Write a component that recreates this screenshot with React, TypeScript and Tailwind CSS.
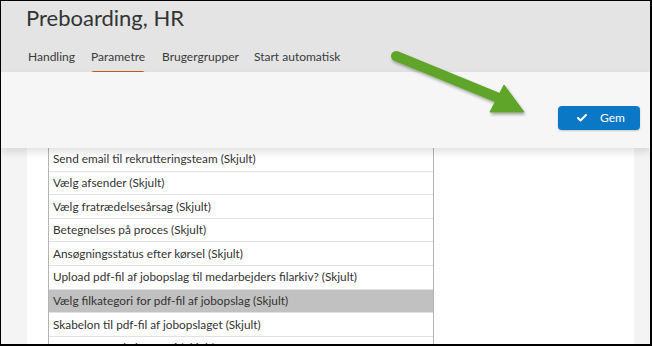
import { Check } from "lucide-react";

const rows = [
  "Send email til rekrutteringsteam (Skjult)",
  "Vælg afsender (Skjult)",
  "Vælg fratrædelsesårsag (Skjult)",
  "Betegnelses på proces (Skjult)",
  "Ansøgningsstatus efter kørsel (Skjult)",
  "Upload pdf-fil af jobopslag til medarbejders filarkiv? (Skjult)",
  "Vælg filkategori for pdf-fil af jobopslag (Skjult)",
  "Skabelon til pdf-fil af jobopslaget (Skjult)",
  "Fravær Fravælg kategori (Skjult)",
];

const tabs = [
  { label: "Handling", w: "w-[63px]" },
  { label: "Parametre", w: "w-[71px]" },
  { label: "Brugergrupper", w: "w-[92px]" },
  { label: "Start automatisk", w: "w-[100px]" },
];

export default function App() {
  return (
    <div className="relative w-[652px] h-[346px] overflow-hidden border-t border-l border-r-2 border-b-2 border-black bg-[#f4f4f4] font-['Lato','Open_Sans',sans-serif] text-[#333]">
      <div className="h-[71px] bg-[#e4e4e4] pl-[25px] pt-[3px]">
        <h1 className="text-[22px] leading-[28px] text-[#333]">Preboarding, HR</h1>
        <div className="flex mt-[15px] pl-[2px] text-[12px]">
          {tabs.map((t) => (
            <div key={t.label} className={`${t.w} shrink-0`}>
              <div className="inline-flex flex-col whitespace-nowrap">
                <span className="leading-[20px] text-[#3a3a3a]">{t.label}</span>
                <span
                  className={
                    t.label === "Parametre"
                      ? "mt-[4px] h-[3px] w-full rounded-t-sm bg-[#c4581a]"
                      : "mt-[4px] h-[3px] w-full"
                  }
                />
              </div>
            </div>
          ))}
        </div>
      </div>

      <div className="relative z-10 h-[76px] bg-[#f6f6f6] shadow-[0_4px_8px_rgba(0,0,0,0.12)] flex items-start justify-end pr-[10px] pt-[34px]">
        <button className="flex items-center gap-[12px] h-[24px] w-[82px] pl-[18px] rounded-[4px] bg-[#0b78c5] text-white text-[12px] shadow-[0_1px_2px_rgba(0,0,0,0.2)]">
          <Check size={12} strokeWidth={4} />
          <span>Gem</span>
        </button>
      </div>

      <div className="flex h-[200px]">
        <div className="w-[26px] bg-[#f4f4f4]" />
        <div className="w-[607px] bg-white pl-[21px]">
          <div className="w-[386px] border-x border-[#b4b4b4]">
            {rows.map((r, i) => (
              <div
                key={r}
                className={`h-[23.6px] flex items-center pl-[4px] text-[11.8px] whitespace-nowrap border-b border-[#e2e2e2] ${
                  i === 6 ? "bg-[#c1c1c1]" : "bg-white"
                }`}
              >
                {r}
              </div>
            ))}
          </div>
        </div>
        <div className="flex-1 bg-[#f4f4f4]" />
      </div>

      <svg className="absolute left-0 top-0 z-20 pointer-events-none" width="652" height="346">
        <defs>
          <filter id="sh" x="-20%" y="-20%" width="140%" height="140%">
            <feDropShadow dx="1" dy="2" stdDeviation="1.5" floodColor="#000" floodOpacity="0.35" />
          </filter>
        </defs>
        <g filter="url(#sh)" fill="#5ea52a" stroke="#5ea52a">
          <line x1="395" y1="55" x2="500" y2="98" strokeWidth="10" strokeLinecap="round" />
          <polygon points="503,84 523,111 489,111" strokeWidth="1" strokeLinejoin="round" />
        </g>
      </svg>
    </div>
  );
}
